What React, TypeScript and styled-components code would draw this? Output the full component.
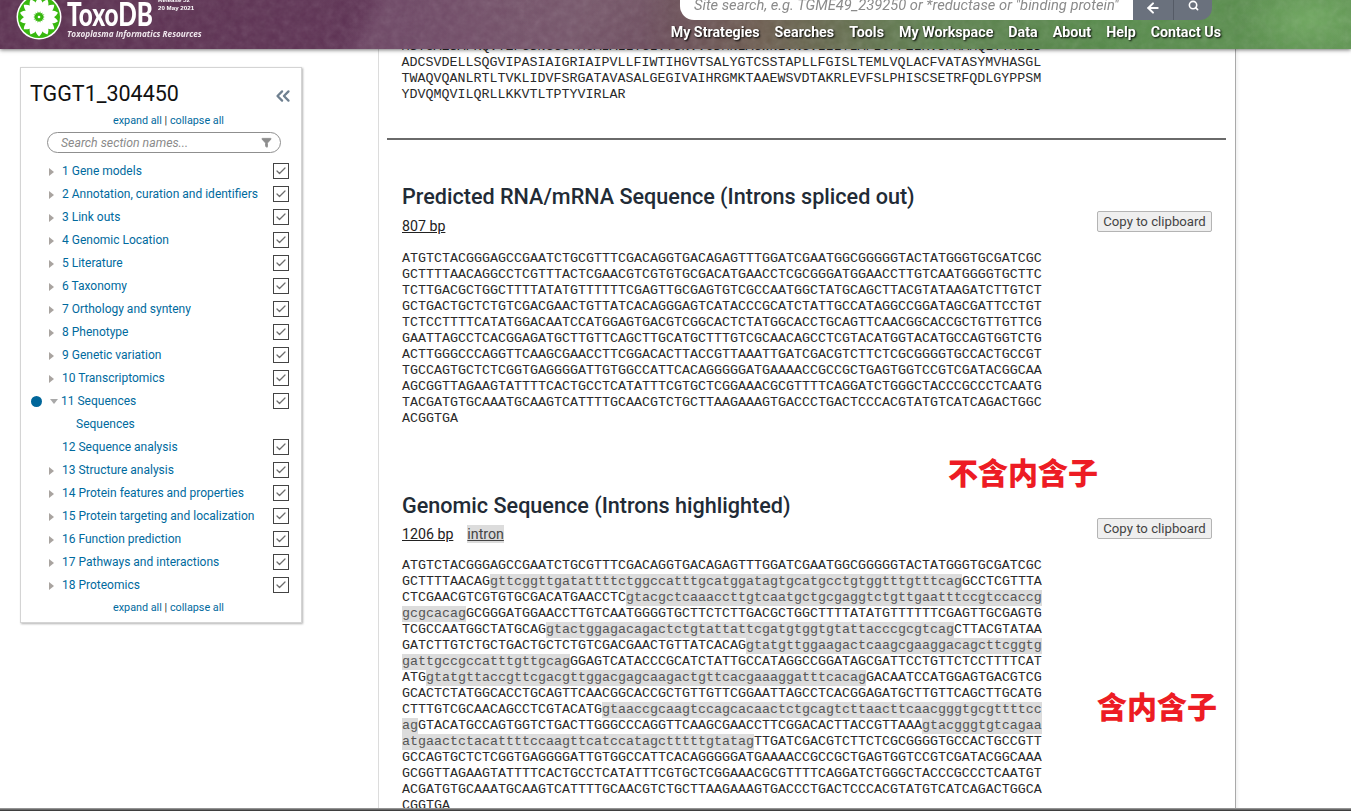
import React from 'react';
import styled, { createGlobalStyle } from 'styled-components';
import { ArrowLeft, ChevronsLeft, Search, Filter, Check } from 'lucide-react';

const GlobalStyle = createGlobalStyle`
  html, body {
    margin: 0;
    padding: 0;
    height: 811px;
    overflow: hidden;
    background: #fff;
    font-family: Roboto, 'Liberation Sans', sans-serif;
  }
`;

const HeaderBar = styled.header`
  position: fixed;
  top: 0;
  left: 0;
  right: 0;
  height: 49px;
  z-index: 10;
  display: flex;
  justify-content: space-between;
  overflow: hidden;
  box-shadow: 0 1px 4px rgba(0, 0, 0, 0.55);
  background:
    radial-gradient(ellipse 70px 40px at 1310px 20px, #6fa85f 0%, rgba(111, 168, 95, 0) 100%),
    linear-gradient(118deg, rgba(255, 255, 255, 0) 0 322px, rgba(255, 255, 255, 0.1) 345px 520px, rgba(255, 255, 255, 0) 600px),
    linear-gradient(90deg, #5b2f50 0, #5e3254 400px, #6b4a5c 640px, #6d5d50 760px, #5f8150 930px, #568a4a 1100px, #5d9250 1351px);
`;

const Noise = styled.svg`
  position: absolute;
  inset: 0;
  width: 100%;
  height: 100%;
  opacity: 0.16;
  pointer-events: none;
`;

const Brand = styled.div`
  position: relative;
  display: flex;
  align-items: flex-end;
  gap: 5px;
  padding: 0 0 9px 16px;
`;

const BrandText = styled.div`
  display: flex;
  flex-direction: column;
  width: 140px;
`;

const BrandRow = styled.div`
  display: flex;
  align-items: flex-start;
  height: 27px;
`;

const BrandName = styled.div`
  font-family: Lato, sans-serif;
  font-weight: 900;
  font-size: 32px;
  line-height: 25px;
  color: #fff;
  width: 91px;
  transform: scaleX(0.76);
  transform-origin: left center;
  white-space: nowrap;
`;

const Release = styled.div`
  font-family: 'Liberation Sans', sans-serif;
  font-weight: 700;
  font-size: 6.2px;
  line-height: 8px;
  color: #fff;
  margin-top: -5px;
  white-space: nowrap;
`;

const Tagline = styled.div`
  font-family: 'Open Sans', sans-serif;
  font-style: italic;
  font-weight: 700;
  font-size: 9px;
  line-height: 12px;
  color: #efe6ec;
  white-space: nowrap;
  transform: scaleX(0.91);
  transform-origin: left center;
`;

const TopRight = styled.div`
  position: relative;
  display: flex;
  flex-direction: column;
  align-items: flex-end;
  padding-right: 130px;
`;

const SearchWrap = styled.div`
  display: flex;
  height: 20px;
  width: 532px;
  margin-right: 9px;
`;

const SearchField = styled.div`
  width: 453px;
  box-sizing: border-box;
  padding: 0 14px;
  background: #fff;
  border-bottom-left-radius: 14px;
  font-style: italic;
  font-size: 14.7px;
  line-height: 11px;
  color: #8b8b8b;
  white-space: nowrap;
  overflow: hidden;
`;

const SearchBtn = styled.div<{ $last?: boolean }>`
  width: ${(p) => (p.$last ? '39px' : '40px')};
  background: #6a717d;
  color: #fff;
  display: flex;
  justify-content: center;
  box-sizing: border-box;
  height: 20px;
  border-left: ${(p) => (p.$last ? '1px solid #555b66' : 'none')};
  border-bottom-right-radius: ${(p) => (p.$last ? '12px' : '0')};
`;

const Nav = styled.nav`
  display: flex;
  gap: 15px;
  margin-top: 4px;
`;

const NavLink = styled.span`
  font-weight: 700;
  font-size: 14.25px;
  line-height: 17px;
  color: #fff;
  text-shadow: 1px 1px 2px #000;
  white-space: nowrap;
`;

const Page = styled.div`
  display: flex;
  align-items: flex-start;
  height: 811px;
  overflow: hidden;
  position: relative;
`;

const SideColumn = styled.aside`
  width: 378px;
  flex: none;
  box-sizing: border-box;
  padding: 67px 0 0 20px;
`;

const SidePanel = styled.div`
  width: 282px;
  height: 556px;
  box-sizing: border-box;
  border: 1px solid #d4d4d4;
  box-shadow: 1px 1px 2px rgba(0, 0, 0, 0.3);
  padding: 12px 12px 0 9px;
  position: relative;
`;

const TitleRow = styled.div`
  display: flex;
  align-items: center;
  justify-content: space-between;
  height: 28px;
`;

const Title = styled.div`
  font-size: 21.5px;
  line-height: 28px;
  color: #111;
`;

const CollapseIcon = styled.div`
  color: #6f8090;
  display: flex;
  margin: 3px -5px 0 0;
`;

const ExpandRow = styled.div`
  text-align: center;
  font-size: 10.8px;
  line-height: 14px;
  color: #333;
  padding-left: 18px;
`;

const TopExpand = styled(ExpandRow)`
  margin-top: 6px;
`;

const BottomExpand = styled(ExpandRow)`
  margin-top: 4px;
`;

const Link = styled.span`
  color: #006a9e;
`;

const SectionSearch = styled.div`
  margin: 4px 0 7px 17px;
  width: 234px;
  height: 21px;
  box-sizing: border-box;
  border: 1px solid #8f8f8f;
  border-radius: 11px;
  padding: 0 8px 0 13px;
  display: flex;
  align-items: center;
  justify-content: space-between;
  font-style: italic;
  font-size: 12.3px;
  color: #8a8a8a;
`;

const Rows = styled.div`
  display: flex;
  flex-direction: column;
`;

const Row = styled.div`
  height: 23px;
  display: flex;
  align-items: center;
  position: relative;
`;

const ActiveDot = styled.span`
  position: absolute;
  left: 1px;
  top: 6px;
  width: 11px;
  height: 11px;
  border-radius: 50%;
  background: #00669a;
`;

const Caret = styled.span<{ $open?: boolean; $hidden?: boolean }>`
  width: 0;
  height: 0;
  margin-left: ${(p) => (p.$open ? '20px' : '19px')};
  margin-right: ${(p) => (p.$open ? '3px' : '8px')};
  visibility: ${(p) => (p.$hidden ? 'hidden' : 'visible')};
  border-style: solid;
  border-color: transparent;
  border-width: ${(p) => (p.$open ? '5px 4.5px 0 4.5px' : '4.5px 0 4.5px 5px')};
  border-top-color: ${(p) => (p.$open ? '#a9a9a9' : 'transparent')};
  border-left-color: ${(p) => (p.$open ? 'transparent' : '#a9a4a0')};
`;

const RowLabel = styled.span<{ $sub?: boolean }>`
  flex: 1;
  font-size: 12px;
  line-height: 23px;
  color: #006a9e;
  white-space: nowrap;
  padding-left: ${(p) => (p.$sub ? '14px' : '0')};
`;

const CheckBox = styled.span`
  width: 16px;
  height: 16px;
  margin-top: -2px;
  box-sizing: border-box;
  border: 1.5px solid #444;
  display: flex;
  align-items: center;
  justify-content: center;
  color: #6d6d6d;
  background: #fff;
`;

const Main = styled.main`
  width: 858px;
  flex: none;
  height: 811px;
  box-sizing: border-box;
  border-left: 1px solid #dcdcdc;
  border-right: 1px solid #a9a9a9;
  box-shadow: 2px 0 3px rgba(0, 0, 0, 0.06);
  padding: 39px 9px 0 8px;
  position: relative;
  overflow: hidden;
`;

const Seq = styled.div`
  font-family: 'Liberation Mono', monospace;
  font-size: 13.33px;
  line-height: 16px;
  color: #2a2a2a;
  padding-left: 14.5px;
`;

const SeqLine = styled.div`
  height: 16px;
  white-space: pre;
`;

const Intron = styled.span`
  display: inline-block;
  vertical-align: top;
  height: 16px;
  background: #dcdcdc;
  color: #555;
`;

const Rule = styled.hr`
  margin: 35px 0 0 0;
  border: none;
  height: 2px;
  background: #6a6a6a;
`;

const Section = styled.section<{ $top: number }>`
  margin-top: ${(p) => p.$top}px;
  padding-left: 15px;
`;

const Heading = styled.h2`
  margin: 0;
  font-weight: 500;
  font-size: 21.6px;
  line-height: 28px;
  color: #222b36;
`;

const MetaRow = styled.div<{ $tight?: boolean }>`
  display: flex;
  align-items: flex-start;
  justify-content: space-between;
  height: 29px;
  padding-right: 14px;
  margin-top: ${(p) => (p.$tight ? '-2px' : '0')};
`;

const Meta = styled.div<{ $top: number }>`
  display: flex;
  gap: 14px;
  margin-top: ${(p) => p.$top}px;
  font-size: 14.2px;
  line-height: 16px;
  color: #222;
`;

const MetaText = styled.span`
  text-decoration: underline;
`;

const MetaIntron = styled(MetaText)`
  background: #dcdcdc;
  color: #444;
  box-shadow: 0 1px 0 #dcdcdc, 0 -1px 0 #dcdcdc;
`;

const CopyButton = styled.button`
  font-family: Roboto, sans-serif;
  font-size: 13.2px;
  line-height: 15px;
  color: #444;
  height: 21px;
  width: 115px;
  padding: 0;
  background: #efefef;
  border: 1px solid #b4b4b4;
  border-radius: 2px;
  white-space: nowrap;
`;

const SeqSpaced = styled(Seq)`
  margin-top: 11px;
  padding-left: 0;
`;

const Note = styled.div<{ $x: number; $y: number }>`
  position: absolute;
  left: ${(p) => p.$x}px;
  top: ${(p) => p.$y}px;
  font-family: 'Noto Sans CJK SC', sans-serif;
  font-weight: 900;
  font-size: 30px;
  line-height: 30px;
  color: #ed1c24;
  white-space: nowrap;
`;

const ScreenEdge = styled.div`
  position: fixed;
  left: 0;
  right: 0;
  bottom: 0;
  height: 3px;
  background: linear-gradient(#a8a8a8, #2a2a2a);
  z-index: 5;
`;

const protein = [
  'MSTGAESAFRQVTEFGSNGGGTMGAIALLTGLVYSNVVCDMNLAGWNLVNGVLLLTLAFICFFELRVSPMAMQLTYKILS',
  'ADCSVDELLSQGVIPASIAIGRIAIPVLLFIWTIHGVTSALYGTCSSTAPLLFGISLTEMLVQLACFVATASYMVHASGL',
  'TWAQVQANLRTLTVKLIDVFSRGATAVASALGEGIVAIHRGMKTAAEWSVDTAKRLEVFSLPHISCSETRFQDLGYPPSM',
  'YDVQMQVILQRLLKKVTLTPTYVIRLAR',
];

const rna = [
  'ATGTCTACGGGAGCCGAATCTGCGTTTCGACAGGTGACAGAGTTTGGATCGAATGGCGGGGGTACTATGGGTGCGATCGC',
  'GCTTTTAACAGGCCTCGTTTACTCGAACGTCGTGTGCGACATGAACCTCGCGGGATGGAACCTTGTCAATGGGGTGCTTC',
  'TCTTGACGCTGGCTTTTATATGTTTTTTCGAGTTGCGAGTGTCGCCAATGGCTATGCAGCTTACGTATAAGATCTTGTCT',
  'GCTGACTGCTCTGTCGACGAACTGTTATCACAGGGAGTCATACCCGCATCTATTGCCATAGGCCGGATAGCGATTCCTGT',
  'TCTCCTTTTCATATGGACAATCCATGGAGTGACGTCGGCACTCTATGGCACCTGCAGTTCAACGGCACCGCTGTTGTTCG',
  'GAATTAGCCTCACGGAGATGCTTGTTCAGCTTGCATGCTTTGTCGCAACAGCCTCGTACATGGTACATGCCAGTGGTCTG',
  'ACTTGGGCCCAGGTTCAAGCGAACCTTCGGACACTTACCGTTAAATTGATCGACGTCTTCTCGCGGGGTGCCACTGCCGT',
  'TGCCAGTGCTCTCGGTGAGGGGATTGTGGCCATTCACAGGGGGATGAAAACCGCCGCTGAGTGGTCCGTCGATACGGCAA',
  'AGCGGTTAGAAGTATTTTCACTGCCTCATATTTCGTGCTCGGAAACGCGTTTTCAGGATCTGGGCTACCCGCCCTCAATG',
  'TACGATGTGCAAATGCAAGTCATTTTGCAACGTCTGCTTAAGAAAGTGACCCTGACTCCCACGTATGTCATCAGACTGGC',
  'ACGGTGA',
];

// lower case runs are the introns
const genomic = [
  'ATGTCTACGGGAGCCGAATCTGCGTTTCGACAGGTGACAGAGTTTGGATCGAATGGCGGGGGTACTATGGGTGCGATCGC',
  'GCTTTTAACAGgttcggttgatattttctggccatttgcatggatagtgcatgcctgtggtttgtttcagGCCTCGTTTA',
  'CTCGAACGTCGTGTGCGACATGAACCTCgtacgctcaaaccttgtcaatgctgcgaggtctgttgaatttccgtccaccg',
  'gcgcacagGCGGGATGGAACCTTGTCAATGGGGTGCTTCTCTTGACGCTGGCTTTTATATGTTTTTTCGAGTTGCGAGTG',
  'TCGCCAATGGCTATGCAGgtactggagacagactctgtattattcgatgtggtgtattacccgcgtcagCTTACGTATAA',
  'GATCTTGTCTGCTGACTGCTCTGTCGACGAACTGTTATCACAGgtatgttggaagactcaagcgaaggacagcttcggtg',
  'gattgccgccatttgttgcagGGAGTCATACCCGCATCTATTGCCATAGGCCGGATAGCGATTCCTGTTCTCCTTTTCAT',
  'ATGgtatgttaccgttcgacgttggacgagcaagactgttcacgaaaggatttcacagGACAATCCATGGAGTGACGTCG',
  'GCACTCTATGGCACCTGCAGTTCAACGGCACCGCTGTTGTTCGGAATTAGCCTCACGGAGATGCTTGTTCAGCTTGCATG',
  'CTTTGTCGCAACAGCCTCGTACATGgtaaccgcaagtccagcacaactctgcagtcttaacttcaacgggtgcgttttcc',
  'agGTACATGCCAGTGGTCTGACTTGGGCCCAGGTTCAAGCGAACCTTCGGACACTTACCGTTAAAgtacgggtgtcagaa',
  'atgaactctacattttccaagttcatccatagctttttgtatagTTGATCGACGTCTTCTCGCGGGGTGCCACTGCCGTT',
  'GCCAGTGCTCTCGGTGAGGGGATTGTGGCCATTCACAGGGGGATGAAAACCGCCGCTGAGTGGTCCGTCGATACGGCAAA',
  'GCGGTTAGAAGTATTTTCACTGCCTCATATTTCGTGCTCGGAAACGCGTTTTCAGGATCTGGGCTACCCGCCCTCAATGT',
  'ACGATGTGCAAATGCAAGTCATTTTGCAACGTCTGCTTAAGAAAGTGACCCTGACTCCCACGTATGTCATCAGACTGGCA',
  'CGGTGA',
];

const sections = [
  '1 Gene models',
  '2 Annotation, curation and identifiers',
  '3 Link outs',
  '4 Genomic Location',
  '5 Literature',
  '6 Taxonomy',
  '7 Orthology and synteny',
  '8 Phenotype',
  '9 Genetic variation',
  '10 Transcriptomics',
  '11 Sequences',
  '12 Sequence analysis',
  '13 Structure analysis',
  '14 Protein features and properties',
  '15 Protein targeting and localization',
  '16 Function prediction',
  '17 Pathways and interactions',
  '18 Proteomics',
];

const navItems = ['My Strategies', 'Searches', 'Tools', 'My Workspace', 'Data', 'About', 'Help', 'Contact Us'];

const Logo = () => (
  <svg width="46" height="46" viewBox="-23 -23 46 46">
    <circle r="22.5" fill="#fff" />
    <circle r="21" fill="#38b80f" />
    {Array.from({ length: 14 }).map((_, i) => (
      <path
        key={i}
        d="M0 -4 C-5 -9 -5 -15 0 -19.5 C5 -15 5 -9 0 -4Z"
        fill="#fff"
        transform={`rotate(${(i * 360) / 14})`}
      />
    ))}
    <circle r="3.4" fill="#38b80f" />
    <circle r="1.3" fill="#fff" />
  </svg>
);

const ExpandLinks = () => (
  <>
    <Link>expand all</Link> | <Link>collapse all</Link>
  </>
);

const App = () => {
  return (
    <>
      <GlobalStyle />
      <HeaderBar>
        <Noise>
          <filter id="grain">
            <feTurbulence type="fractalNoise" baseFrequency="0.12" numOctaves="3" />
            <feColorMatrix type="saturate" values="0" />
          </filter>
          <rect width="100%" height="100%" filter="url(#grain)" />
        </Noise>
        <Brand>
          <Logo />
          <BrandText>
            <BrandRow>
              <BrandName>ToxoDB</BrandName>
              <Release>
                Release 52
                <br />
                20 May 2021
              </Release>
            </BrandRow>
            <Tagline>Toxoplasma Informatics Resources</Tagline>
          </BrandText>
        </Brand>
        <TopRight>
          <SearchWrap>
            <SearchField>Site search, e.g. TGME49_239250 or *reductase or "binding protein"</SearchField>
            <SearchBtn>
              <ArrowLeft size={16} strokeWidth={3} />
            </SearchBtn>
            <SearchBtn $last>
              <Search size={11} strokeWidth={3.5} />
            </SearchBtn>
          </SearchWrap>
          <Nav>
            {navItems.map((n) => (
              <NavLink key={n}>{n}</NavLink>
            ))}
          </Nav>
        </TopRight>
      </HeaderBar>
      <Page>
        <SideColumn>
          <SidePanel>
            <TitleRow>
              <Title>TGGT1_304450</Title>
              <CollapseIcon>
                <ChevronsLeft size={22} strokeWidth={2.5} />
              </CollapseIcon>
            </TitleRow>
            <TopExpand>
              <ExpandLinks />
            </TopExpand>
            <SectionSearch>
              <span>Search section names...</span>
              <Filter size={11} fill="#8d8d8d" color="#8d8d8d" />
            </SectionSearch>
            <Rows>
              {sections.map((s) => {
                const open = s.startsWith('11 ');
                return (
                  <React.Fragment key={s}>
                    <Row>
                      {open && <ActiveDot />}
                      <Caret $open={open} $hidden={s.startsWith('12 ')} />
                      <RowLabel>{s}</RowLabel>
                      <CheckBox>
                        <Check size={12} strokeWidth={2.5} />
                      </CheckBox>
                    </Row>
                    {open && (
                      <Row>
                        <Caret $hidden />
                        <RowLabel $sub>Sequences</RowLabel>
                      </Row>
                    )}
                  </React.Fragment>
                );
              })}
            </Rows>
            <BottomExpand>
              <ExpandLinks />
            </BottomExpand>
          </SidePanel>
        </SideColumn>
        <Main>
          <Seq>
            {protein.map((l) => (
              <SeqLine key={l}>{l}</SeqLine>
            ))}
          </Seq>
          <Rule />
          <Section $top={43}>
            <Heading>Predicted RNA/mRNA Sequence (Introns spliced out)</Heading>
            <MetaRow>
              <Meta $top={7}>
                <MetaText>807 bp</MetaText>
              </Meta>
              <CopyButton>Copy to clipboard</CopyButton>
            </MetaRow>
            <SeqSpaced>
              {rna.map((l) => (
                <SeqLine key={l}>{l}</SeqLine>
              ))}
            </SeqSpaced>
          </Section>
          <Section $top={65}>
            <Heading>Genomic Sequence (Introns highlighted)</Heading>
            <MetaRow $tight>
              <Meta $top={8}>
                <MetaText>1206 bp</MetaText>
                <MetaIntron>intron</MetaIntron>
              </Meta>
              <CopyButton>Copy to clipboard</CopyButton>
            </MetaRow>
            <SeqSpaced>
              {genomic.map((l, i) => (
                <SeqLine key={i}>
                  {l.split(/([a-z]+)/).map((part, j) =>
                    /^[a-z]/.test(part) ? <Intron key={j}>{part}</Intron> : part,
                  )}
                </SeqLine>
              ))}
            </SeqSpaced>
          </Section>
          <Note $x={569} $y={456}>不含内含子</Note>
          <Note $x={718} $y={690}>含内含子</Note>
        </Main>
      </Page>
      <ScreenEdge />
    </>
  );
};

export default App;
